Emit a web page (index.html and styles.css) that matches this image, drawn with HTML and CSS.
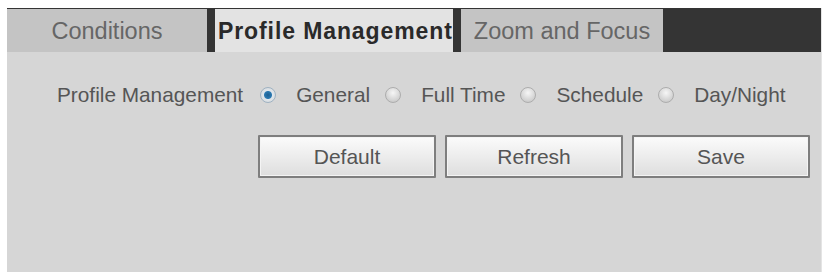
FILE: index.html
```html
<!DOCTYPE html>
<html lang="en">
<head>
    <meta charset="UTF-8">
    <meta name="viewport" content="width=device-width, initial-scale=1.0">
    <title>Profile Management</title>
    <link rel="stylesheet" href="styles.css">
</head>
<body>

    <div class="panel">
        <!-- Tabs -->
        <div class="tabs">
            <div class="tab">Conditions</div>
            <div class="tab active">Profile Management</div>
            <div class="tab tab-zoom">Zoom and Focus</div>
        </div>

        <div class="panel-body">
            <div class="profile-row">
                <span class="row-label">Profile Management</span>
                <label class="option"><input type="radio" name="profile" checked> General</label>
                <label class="option"><input type="radio" name="profile"> Full Time</label>
                <label class="option"><input type="radio" name="profile"> Schedule</label>
                <label class="option"><input type="radio" name="profile"> Day/Night</label>
            </div>

            <div class="button-row">
                <button type="button">Default</button>
                <button type="button">Refresh</button>
                <button type="button">Save</button>
            </div>
        </div>
    </div>

</body>
</html>
```

FILE: styles.css
```css
body {
    font-family: "Liberation Sans", Arial, sans-serif;
    background-color: #ffffff;
    margin: 0;
}
.panel {
    margin: 8px 0 0 7px;
    width: 815px;
    height: 264px;
    background-color: #d6d6d6;
    border-right: 1px solid #e4e4e4;
    box-sizing: border-box;
    display: flex;
    flex-direction: column;
}
.tabs {
    display: flex;
    gap: 8px;
    height: 44px;
    padding-top: 1px;
    box-sizing: border-box;
    background-color: #343434;
}
.tab {
    width: 200px;
    background-color: #c4c4c4;
    color: #666;
    font-size: 23.5px;
    display: flex;
    align-items: center;
    justify-content: center;
    padding-top: 2px;
    box-sizing: border-box;
}
.tab.active {
    width: 238px;
    background-color: #e3e3e3;
    color: #2a2a2a;
    font-weight: bold;
    font-size: 23px;
    letter-spacing: 0.9px;
    justify-content: flex-start;
    padding-left: 3px;
    white-space: nowrap;
    overflow: hidden;
}
.tab-zoom {
    width: 202px;
}
.panel-body {
    flex-grow: 1;
    padding: 29px 0 0 50px;
}
.profile-row {
    display: flex;
    align-items: center;
    height: 28px;
    color: #555;
    font-size: 20.8px;
}
.row-label {
    margin-right: 17px;
}
.option {
    display: flex;
    align-items: center;
    gap: 20px;
    margin-right: 15px;
}
.option input {
    appearance: none;
    -webkit-appearance: none;
    margin: 0;
    width: 16px;
    height: 16px;
    border-radius: 50%;
    border: 1px solid #adadad;
    background: radial-gradient(circle at 50% 35%, #f6f6f6, #d0d0d0 70%, #c2c2c2);
    box-sizing: border-box;
}
.option input:checked {
    border-color: #9fb2c2;
    background: radial-gradient(circle, #1d5f92 0, #2a78b0 3.5px, #dfe6ec 4.5px, #d4d4d4 100%);
}
.button-row {
    display: flex;
    gap: 9px;
    margin: 26px 0 0 201px;
}
.button-row button {
    width: 178px;
    height: 43px;
    font-family: inherit;
    font-size: 21px;
    color: #555;
    border: 2px solid #7e7e7e;
    border-radius: 1px;
    background: linear-gradient(#fbfbfb, #dedede);
    box-shadow: inset 0 0 0 1px #f4f4f4;
    cursor: pointer;
}
```
